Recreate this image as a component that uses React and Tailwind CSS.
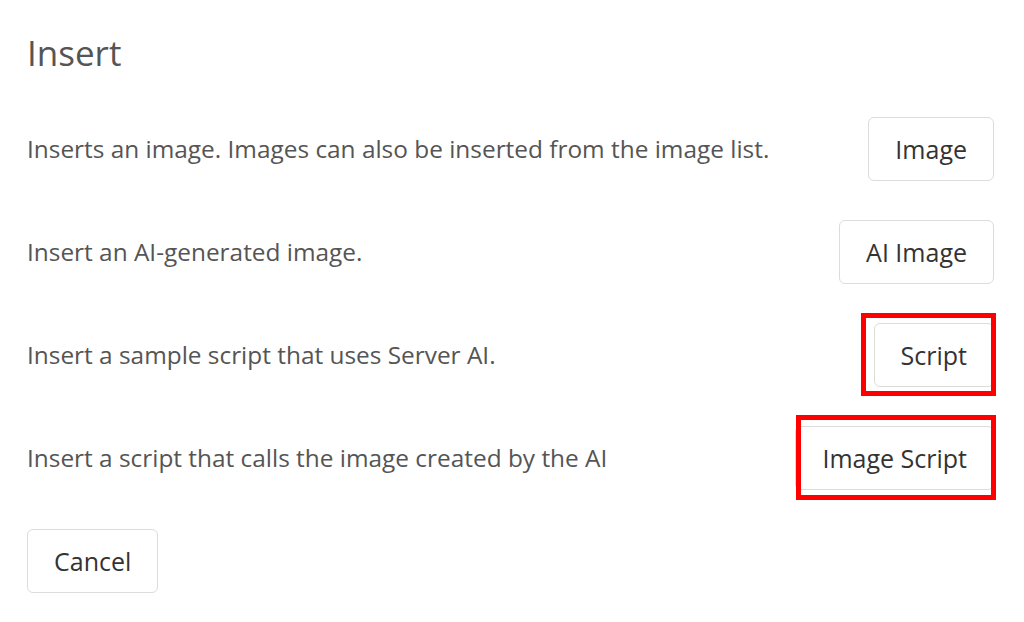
export default function App() {
  const font = { fontFamily: '"Open Sans", "Noto Sans", sans-serif' };
  const btn =
    "h-[64px] px-[26px] rounded-[6px] border border-[#dcdcdc] bg-white text-[#333333] text-[25px] leading-none shrink-0";
  const txt = "text-[24.4px] text-[#555555]";
  return (
    <div className="w-[1024px] h-[622px] bg-white pl-[27px] pr-[30px] pt-[28px]" style={font}>
      <h1 className="text-[35px] leading-[50px] text-[#555555] font-normal h-[89px]">Insert</h1>
      <div className="flex flex-col gap-[39px]">
        <div className="flex items-center justify-between">
          <span className={txt}>Inserts an image. Images can also be inserted from the image list.</span>
          <button className={btn}>Image</button>
        </div>
        <div className="flex items-center justify-between">
          <span className={txt}>Insert an AI-generated image.</span>
          <button className={btn}>AI Image</button>
        </div>
        <div className="flex items-center justify-between">
          <span className={txt}>Insert a sample script that uses Server AI.</span>
          <div className="relative">
            <button className={btn}>Script</button>
            <div className="absolute left-[-13px] top-[-10px] right-[-2px] bottom-[-9px] border-[5px] border-[#ff0000] pointer-events-none"></div>
          </div>
        </div>
        <div className="flex items-center justify-between">
          <span className={txt}>Insert a script that calls the image created by the AI</span>
          <div className="relative">
            <button className={btn}>Image Script</button>
            <div className="absolute left-[1px] top-[-11px] right-[-2px] bottom-[-10px] border-[5px] border-[#ff0000] pointer-events-none"></div>
          </div>
        </div>
        <div className="flex">
          <button className={btn}>Cancel</button>
        </div>
      </div>
    </div>
  );
}
